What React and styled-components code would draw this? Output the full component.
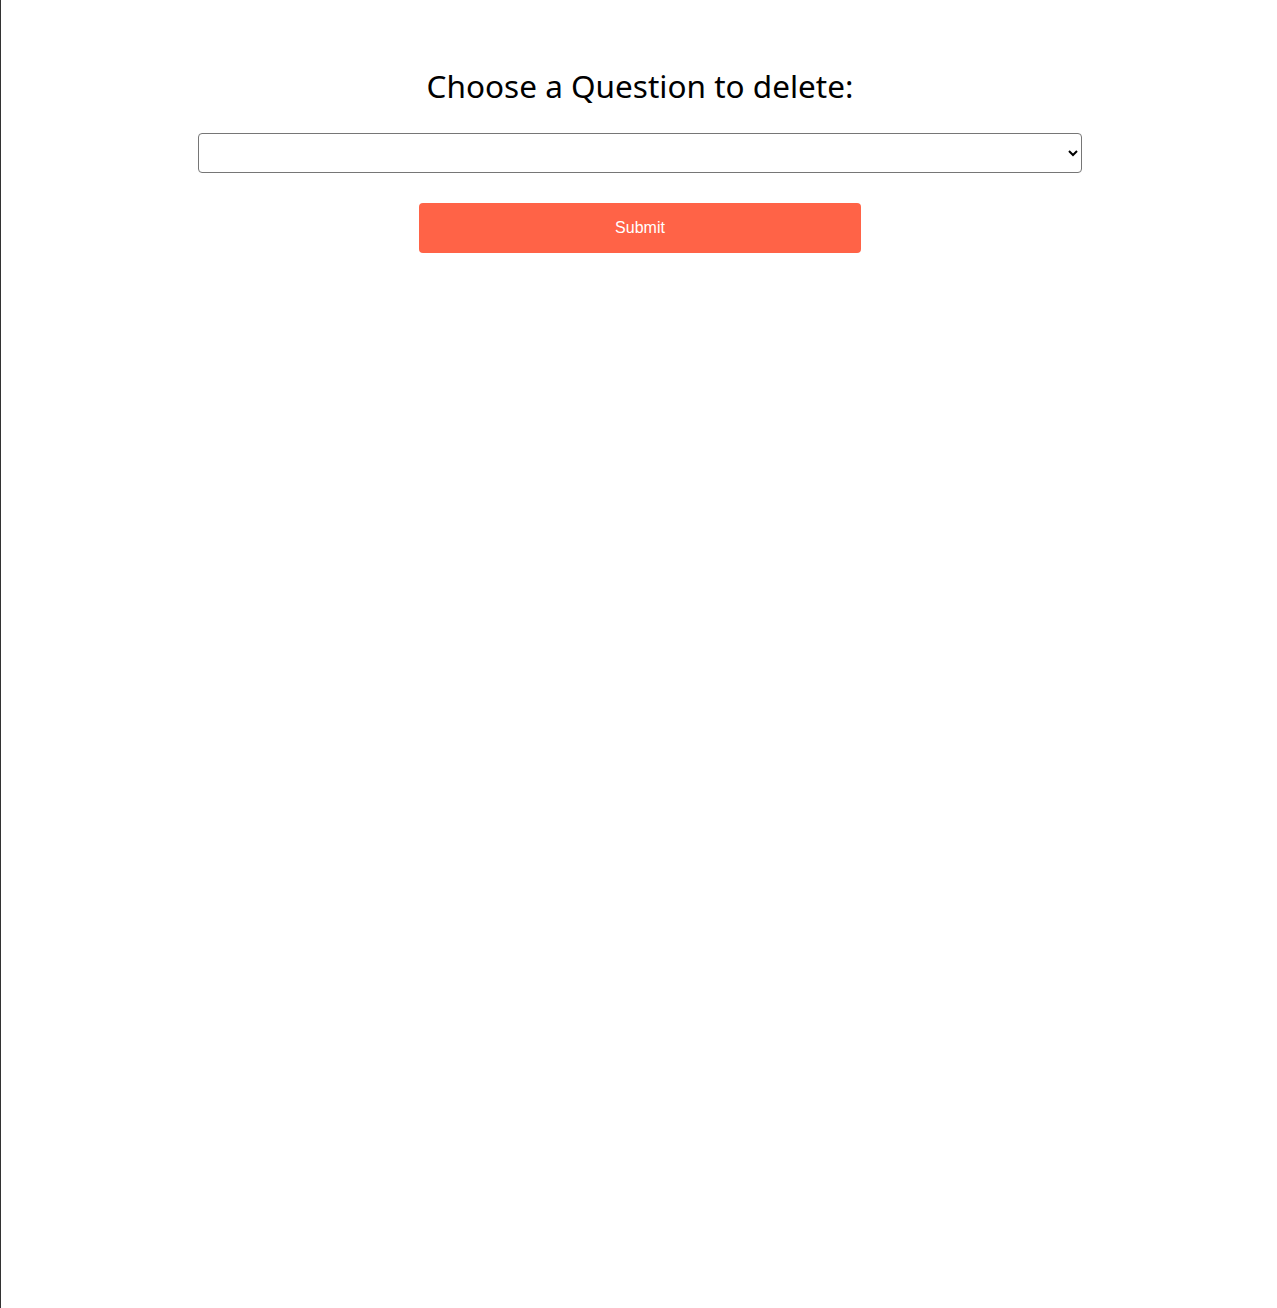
import React, { Component } from 'react'
import styled, { createGlobalStyle } from 'styled-components'

const Global = createGlobalStyle`
    html, body {
        margin: 0;
        background: #fff;
    }
`

export default class App extends Component {
    constructor(props) {
        super(props);
        this.state = {
            question: ''
        }
    }
    render() {
        return (
            <Page>
                <Global />
                <Form onSubmit={(e) => e.preventDefault()}>
                    <Title>Choose a Question to delete:</Title>
                    <Select value={this.state.question} onChange={(e) => this.setState({ question: e.target.value })}>
                        <option value=""></option>
                    </Select>
                    <Button type="submit">Submit</Button>
                </Form>
            </Page>
        )
    }
}

const Page = styled.div`
    min-height: 1308px;
    box-sizing: border-box;
    border-left: 1px solid #333;
    padding: 0 6px 0 8px;
`

const Form = styled.form`
    width: 70%;
    margin: 0 auto;
    padding-top: 64px;
    display: flex;
    flex-direction: column;
    align-items: center;
`

const Title = styled.h2`
    font-family: "Noto Sans", "Open Sans", sans-serif;
    font-weight: 400;
    font-size: 31.5px;
    line-height: 44px;
    color: #000;
    margin: 0 0 25px;
`

const Select = styled.select`
    width: 100%;
    height: 40px;
    box-sizing: border-box;
    border: 1px solid #767676;
    border-radius: 4px;
    background: #fff;
    font-family: "Liberation Sans", Arial, sans-serif;
    font-size: 16px;
    margin: 0 0 30px;
`

const Button = styled.button`
    width: 50%;
    height: 50px;
    border: none;
    border-radius: 4px;
    background-color: #ff6347;
    color: #fff;
    font-family: "Liberation Sans", Arial, sans-serif;
    font-size: 16px;
    cursor: pointer;
`
